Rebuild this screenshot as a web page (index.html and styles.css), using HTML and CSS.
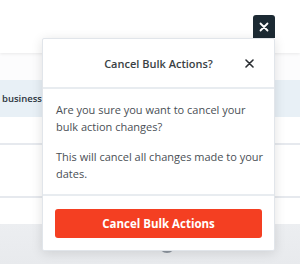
FILE: index.html
```html
<!DOCTYPE html>
<html>
<head>
<meta charset="utf-8">
<link rel="stylesheet" href="styles.css">
</head>
<body>
<div class="page">
  <div class="topbar"></div>
  <div class="band"></div>
  <div class="row row-active"><div class="cell"><span class="cell-text">- business</span></div></div>
  <div class="row row-a"></div>
  <div class="row row-b"></div>
  <div class="row row-c"></div>
  <div class="footer-area"><span class="tick"></span><span class="dot"></span></div>

  <div class="overlay">
    <button class="dismiss" aria-label="Close">
      <svg width="10" height="10" viewBox="0 0 10 10"><path d="M1.5 1.5L8.5 8.5M8.5 1.5L1.5 8.5" stroke="#fff" stroke-width="1.8" stroke-linecap="round"/></svg>
    </button>
    <div class="modal">
      <div class="modal-header">
        <span class="modal-title">Cancel Bulk Actions?</span>
        <span class="modal-close">
          <svg width="9" height="9" viewBox="0 0 9 9"><path d="M1 1L8 8M8 1L1 8" stroke="#2b2f33" stroke-width="1.6" stroke-linecap="round"/></svg>
        </span>
      </div>
      <div class="modal-body">
        <p>Are you sure you want to cancel your bulk action changes?</p>
        <p>This will cancel all changes made to your dates.</p>
      </div>
      <div class="modal-footer">
        <button class="btn-danger">Cancel Bulk Actions</button>
      </div>
    </div>
  </div>
</div>
</body>
</html>
```

FILE: styles.css
```css
* { box-sizing: border-box; }
html, body { margin: 0; padding: 0; }
body {
  width: 300px;
  height: 264px;
  overflow: hidden;
  font-family: "Open Sans", "Noto Sans", sans-serif;
  background: #ffffff;
}
.page {
  position: relative;
  width: 300px;
  height: 264px;
  display: flex;
  flex-direction: column;
}
.topbar {
  height: 53px;
  flex: none;
  background: #ffffff;
  box-shadow: 0 1px 3px rgba(0,0,0,0.08);
  position: relative;
  z-index: 1;
}
.band {
  height: 27px;
  flex: none;
  background: #fcfcfd;
}
.row {
  flex: none;
  background: #fff;
  border-bottom: 2px solid #e6e9ee;
}
.row-active {
  height: 37px;
  background: #e8f0f6;
  display: flex;
  align-items: center;
  border-bottom: none;
}
.cell {
  width: 42px;
  flex: none;
  display: flex;
  justify-content: flex-end;
  overflow: hidden;
}
.cell-text {
  flex: none;
  white-space: nowrap;
  font-size: 9.5px;
  font-weight: 600;
  color: #2d3640;
}
.row-a { height: 28px; }
.row-b { height: 53px; }
.row-c { height: 26px; border-bottom: none; }
.footer-area {
  flex: 1;
  background: linear-gradient(#eceef1, #e8eaed);
  position: relative;
}
.dot {
  position: absolute;
  left: 159px;
  top: 13px;
  width: 16px;
  height: 16px;
  border-radius: 50%;
  background: #8e96a0;
}
.tick {
  position: absolute;
  left: 146px;
  top: 25px;
  width: 2px;
  height: 2px;
  border-radius: 50%;
  background: #555;
}
.overlay {
  position: absolute;
  left: 42px;
  top: 15px;
  width: 233px;
  z-index: 5;
  display: flex;
  flex-direction: column;
  align-items: flex-end;
}
.dismiss {
  width: 22px;
  height: 23px;
  border: none;
  border-radius: 3px 3px 0 0;
  background: #1c2a33;
  display: flex;
  align-items: center;
  justify-content: center;
  padding: 0;
}
.modal {
  width: 233px;
  background: #fff;
  border: 1px solid #e1e5ea;
  border-radius: 2px;
  box-shadow: 0 2px 12px rgba(0,0,0,0.12);
}
.modal-header {
  height: 50px;
  border-bottom: 2px solid #e8ecf0;
  display: flex;
  align-items: center;
  justify-content: center;
  position: relative;
}
.modal-title {
  font-size: 11px;
  font-weight: 600;
  color: #3a3f44;
}
.modal-close {
  position: absolute;
  right: 20px;
  top: 20px;
  display: flex;
}
.modal-body {
  padding: 12px 10px 12px 13px;
  font-size: 11px;
  line-height: 17px;
  color: #4a4f55;
}
.modal-body p { margin: 0 0 13px 0; }
.modal-body p:last-child { margin-bottom: 0; }
.modal-footer {
  border-top: 2px solid #e8ecf0;
  padding: 13px 12px 12px 12px;
}
.btn-danger {
  width: 100%;
  height: 29px;
  border: none;
  border-radius: 3px;
  background: #f43f22;
  color: #fff;
  font-family: "Open Sans", "Noto Sans", sans-serif;
  font-size: 11.5px;
  font-weight: 700;
}
```
